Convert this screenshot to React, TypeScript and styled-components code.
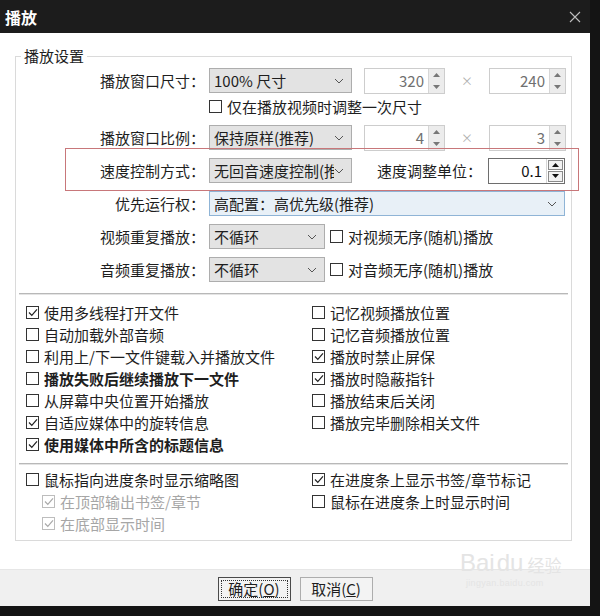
import React from 'react';
import styled, { createGlobalStyle } from 'styled-components';

const GlobalStyle = createGlobalStyle`
  html, body {
    margin: 0;
    padding: 0;
    background: #141414;
  }
  body {
    width: 600px;
    height: 616px;
    overflow: hidden;
    font-family: "Noto Sans CJK SC", "Microsoft YaHei", sans-serif;
  }
`;

const Window = styled.div`
  position: relative;
  width: 590px;
  height: 606px;
  background: #fff;
  display: flex;
  flex-direction: column;
  color: #1e1e1e;
  font-size: 15px;
`;

const TitleBar = styled.div`
  height: 33px;
  box-sizing: border-box;
  background: #1c1c1c;
  display: flex;
  align-items: center;
  justify-content: space-between;
  padding: 0 9px 0 5px;
  color: #fff;
  font-size: 16px;
  font-weight: 700;
`;

const Group = styled.fieldset`
  margin: 13px 18px 0 15px;
  padding: 2px 0 6px 0;
  border: 1px solid #dadada;
  min-width: 0;
`;

const Legend = styled.legend`
  margin-left: 5px;
  padding: 0 3px;
  line-height: 20px;
`;

const FormRow = styled.div<{ $mt?: number }>`
  display: flex;
  align-items: center;
  height: 25px;
  margin-top: ${(p) => p.$mt ?? 8}px;
  white-space: nowrap;
`;

const Label = styled.div<{ $w?: number; $ml?: number }>`
  width: ${(p) => p.$w ?? 189}px;
  margin-left: ${(p) => p.$ml ?? 0}px;
  margin-right: 4px;
  text-align: right;
  flex-shrink: 0;
`;

const Combo = styled.div<{ $w: number; $focus?: boolean }>`
  width: ${(p) => p.$w}px;
  height: 25px;
  box-sizing: border-box;
  flex-shrink: 0;
  border: 1px solid ${(p) => (p.$focus ? '#8fb4d6' : '#adadad')};
  background: ${(p) => (p.$focus ? '#e8f0f7' : '#e3e3e3')};
  display: flex;
  align-items: center;
  padding: 0 7px 0 4px;
  line-height: 23px;
`;

const ComboText = styled.span`
  flex: 1;
  overflow: hidden;
  white-space: nowrap;
`;

const Spin = styled.div<{ $w: number; $ml?: number; $active?: boolean }>`
  width: ${(p) => p.$w}px;
  height: 26px;
  margin-left: ${(p) => p.$ml ?? 0}px;
  box-sizing: border-box;
  flex-shrink: 0;
  border: 1px solid ${(p) => (p.$active ? '#6e6e6e' : '#cdcdcd')};
  background: #fff;
  display: flex;
`;

const SpinValue = styled.div<{ $active?: boolean }>`
  flex: 1;
  text-align: right;
  padding-right: 4px;
  line-height: 24px;
  color: ${(p) => (p.$active ? '#111' : '#707070')};
`;

const SpinButtons = styled.div<{ $active?: boolean }>`
  width: 15px;
  display: flex;
  flex-direction: column;
  gap: ${(p) => (p.$active ? 1 : 0)}px;
  padding: ${(p) => (p.$active ? '1px' : '0')};
  background: ${(p) => (p.$active ? '#fff' : '#ececec')};
  border-left: 1px solid #d6d6d6;
`;

const SpinBtn = styled.div<{ $active?: boolean }>`
  flex: 1;
  display: flex;
  align-items: center;
  justify-content: center;
  border: ${(p) => (p.$active ? '1px solid #8a8a8a' : 'none')};
  background: ${(p) => (p.$active ? '#f2f2f2' : 'transparent')};
`;

const Times = styled.span`
  width: 44px;
  text-align: center;
  color: #b0b0b0;
  font-size: 12px;
`;

const Separator = styled.div<{ $mt: number }>`
  margin: ${(p) => p.$mt}px 3px 0;
  border-top: 1px solid #b8b8b8;
  border-bottom: 1px solid #e4e4e4;
`;

const CheckGrid = styled.div<{ $rows: number; $mt: number }>`
  display: grid;
  grid-auto-flow: column;
  grid-template-columns: 286px 1fr;
  grid-template-rows: repeat(${(p) => p.$rows}, 22px);
  padding-left: 10px;
  margin-top: ${(p) => p.$mt}px;
`;

const CheckRow = styled.div<{ $indent?: number }>`
  display: flex;
  align-items: center;
  padding-left: ${(p) => p.$indent ?? 0}px;
  white-space: nowrap;
`;

const InlineCheck = styled(CheckRow)`
  height: 20px;
  margin-top: 3px;
  padding-left: 193px;
`;

const Box = styled.span<{ $disabled?: boolean }>`
  width: 13px;
  height: 13px;
  box-sizing: border-box;
  flex-shrink: 0;
  border: 1px solid ${(p) => (p.$disabled ? '#bdbdbd' : '#333')};
  background: #fff;
  display: inline-flex;
  align-items: center;
  justify-content: center;
`;

const CheckText = styled.span<{ $bold?: boolean; $disabled?: boolean }>`
  margin-left: 5px;
  font-weight: ${(p) => (p.$bold ? 700 : 400)};
  color: ${(p) => (p.$disabled ? '#a6a6a6' : '#1e1e1e')};
`;

const Footer = styled.div`
  margin-top: auto;
  height: 37px;
  box-sizing: border-box;
  border-top: 1px solid #e6e6e6;
  background: #f0f0f0;
  display: flex;
  justify-content: center;
  align-items: flex-start;
  gap: 9px;
  padding-top: 7px;
`;

const Button = styled.button<{ $default?: boolean }>`
  width: 73px;
  height: 24px;
  box-sizing: border-box;
  border: 1px solid ${(p) => (p.$default ? '#4a4a4a' : '#adadad')};
  background: #f3f3f3;
  font: inherit;
  font-size: 15px;
  color: #1e1e1e;
  padding: 0;
  line-height: 20px;
  outline: ${(p) => (p.$default ? '1px dotted #333' : 'none')};
  outline-offset: -4px;
`;

const Highlight = styled.div`
  position: absolute;
  left: 65px;
  top: 148px;
  width: 514px;
  height: 43px;
  box-sizing: border-box;
  border: 1.5px solid #c8777a;
  pointer-events: none;
`;

const Watermark = styled.div`
  position: absolute;
  left: 460px;
  top: 550px;
  width: 112px;
  color: #e4e4e4;
  pointer-events: none;
  font-family: "Liberation Sans", Arial, sans-serif;
`;

const WmLine = styled.div`
  display: flex;
  align-items: flex-end;
  gap: 2px;
  font-size: 24px;
  line-height: 26px;
`;

const WmCn = styled.span`
  font-family: "Noto Sans CJK SC", sans-serif;
  font-size: 17px;
  line-height: 22px;
  margin-left: 2px;
`;

const WmUrl = styled.div`
  font-size: 9px;
  letter-spacing: 0.3px;
  margin-top: 2px;
  padding-left: 6px;
`;

const Chevron = () => (
  <svg width="10" height="6" viewBox="0 0 10 6">
    <path d="M1 1 L5 5 L9 1" fill="none" stroke="#555" strokeWidth="1" />
  </svg>
);

const Arrow = ({ up, color }: { up?: boolean; color: string }) => (
  <svg width="7" height="4" viewBox="0 0 7 4">
    <path d={up ? 'M0 4 L3.5 0 L7 4 Z' : 'M0 0 L3.5 4 L7 0 Z'} fill={color} />
  </svg>
);

const Check = ({ checked, disabled, bold, text }: { checked?: boolean; disabled?: boolean; bold?: boolean; text: string }) => (
  <>
    <Box $disabled={disabled}>
      {checked && (
        <svg width="10" height="9" viewBox="0 0 10 9">
          <path d="M1 4.5 L3.8 7.3 L9 1.3" fill="none" stroke={disabled ? '#a9a9a9' : '#222'} strokeWidth="1.2" />
        </svg>
      )}
    </Box>
    <CheckText $bold={bold} $disabled={disabled}>{text}</CheckText>
  </>
);

const SpinBox = ({ value, w, ml, active }: { value: string; w: number; ml?: number; active?: boolean }) => (
  <Spin $w={w} $ml={ml} $active={active}>
    <SpinValue $active={active}>{value}</SpinValue>
    <SpinButtons $active={active}>
      <SpinBtn $active={active}><Arrow up color={active ? '#111' : '#777'} /></SpinBtn>
      <SpinBtn $active={active}><Arrow color={active ? '#111' : '#777'} /></SpinBtn>
    </SpinButtons>
  </Spin>
);

const leftChecks = [
  { text: '使用多线程打开文件', checked: true },
  { text: '自动加载外部音频' },
  { text: '利用上/下一文件键载入并播放文件' },
  { text: '播放失败后继续播放下一文件', bold: true },
  { text: '从屏幕中央位置开始播放' },
  { text: '自适应媒体中的旋转信息', checked: true },
  { text: '使用媒体中所含的标题信息', checked: true, bold: true },
];

const rightChecks = [
  { text: '记忆视频播放位置' },
  { text: '记忆音频播放位置' },
  { text: '播放时禁止屏保', checked: true },
  { text: '播放时隐蔽指针', checked: true },
  { text: '播放结束后关闭' },
  { text: '播放完毕删除相关文件' },
];

export default function App() {
  return (
    <>
      <GlobalStyle />
      <Window>
        <TitleBar>
          <span>播放</span>
          <svg width="12" height="12" viewBox="0 0 12 12">
            <path d="M1 1 L11 11 M11 1 L1 11" stroke="#bdbdbd" strokeWidth="1.1" />
          </svg>
        </TitleBar>

        <Group>
          <Legend>播放设置</Legend>

          <FormRow $mt={0}>
            <Label>播放窗口尺寸：</Label>
            <Combo $w={143}><ComboText>100% 尺寸</ComboText><Chevron /></Combo>
            <SpinBox value="320" w={81} ml={12} />
            <Times>×</Times>
            <SpinBox value="240" w={77} />
          </FormRow>
          <InlineCheck>
            <Check text="仅在播放视频时调整一次尺寸" />
          </InlineCheck>

          <FormRow $mt={9}>
            <Label>播放窗口比例：</Label>
            <Combo $w={143}><ComboText>保持原样(推荐)</ComboText><Chevron /></Combo>
            <SpinBox value="4" w={81} ml={12} />
            <Times>×</Times>
            <SpinBox value="3" w={77} />
          </FormRow>

          <FormRow>
            <Label>速度控制方式：</Label>
            <Combo $w={143}><ComboText>无回音速度控制(推荐)</ComboText><Chevron /></Combo>
            <Label $w={110} $ml={20}>速度调整单位：</Label>
            <SpinBox value="0.1" w={77} ml={2} active />
          </FormRow>

          <FormRow>
            <Label>优先运行权：</Label>
            <Combo $w={356} $focus><ComboText>高配置：高优先级(推荐)</ComboText><Chevron /></Combo>
          </FormRow>

          <FormRow>
            <Label>视频重复播放：</Label>
            <Combo $w={116}><ComboText>不循环</ComboText><Chevron /></Combo>
            <CheckRow $indent={5}>
              <Check text="对视频无序(随机)播放" />
            </CheckRow>
          </FormRow>

          <FormRow>
            <Label>音频重复播放：</Label>
            <Combo $w={116}><ComboText>不循环</ComboText><Chevron /></Combo>
            <CheckRow $indent={5}>
              <Check text="对音频无序(随机)播放" />
            </CheckRow>
          </FormRow>

          <Separator $mt={11} />

          <CheckGrid $rows={7} $mt={6}>
            {leftChecks.map((c) => (
              <CheckRow key={c.text}>
                <Check {...c} />
              </CheckRow>
            ))}
            {rightChecks.map((c) => (
              <CheckRow key={c.text}>
                <Check {...c} />
              </CheckRow>
            ))}
          </CheckGrid>

          <Separator $mt={8} />

          <CheckGrid $rows={3} $mt={3}>
            <CheckRow>
              <Check text="鼠标指向进度条时显示缩略图" />
            </CheckRow>
            <CheckRow $indent={16}>
              <Check text="在顶部输出书签/章节" checked disabled />
            </CheckRow>
            <CheckRow $indent={16}>
              <Check text="在底部显示时间" checked disabled />
            </CheckRow>
            <CheckRow>
              <Check text="在进度条上显示书签/章节标记" checked />
            </CheckRow>
            <CheckRow>
              <Check text="鼠标在进度条上时显示时间" />
            </CheckRow>
          </CheckGrid>
        </Group>

        <Footer>
          <Button $default>确定(<u>O</u>)</Button>
          <Button>取消(<u>C</u>)</Button>
        </Footer>

        <Highlight />
        <Watermark>
          <WmLine>
            <span>Bai</span>
            <span>du</span>
            <WmCn>经验</WmCn>
          </WmLine>
          <WmUrl>jingyan.baidu.com</WmUrl>
        </Watermark>
      </Window>
    </>
  );
}
